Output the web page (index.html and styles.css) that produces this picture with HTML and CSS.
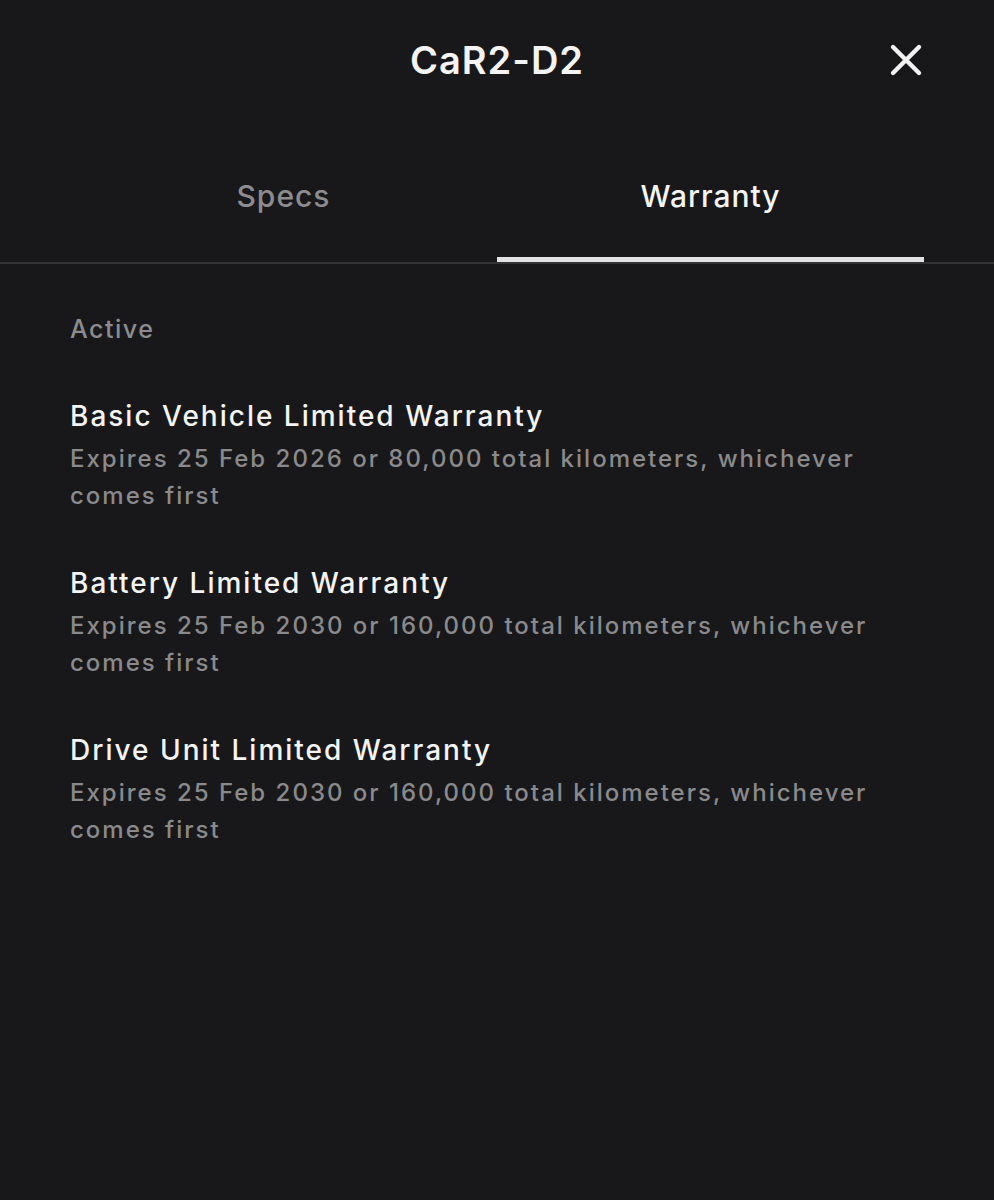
FILE: index.html
```html
<!DOCTYPE html>
<html>
<head>
<meta charset="utf-8">
<link rel="stylesheet" href="styles.css">
</head>
<body>
<div class="screen">
  <header class="header">
    <h1 class="title">CaR2-D2</h1>
    <button class="close" aria-label="Close">
      <svg viewBox="0 0 34 34" width="34" height="34"><path d="M4 4 L30 30 M30 4 L4 30" stroke="#f2f2f2" stroke-width="4.4" stroke-linecap="round" fill="none"/></svg>
    </button>
  </header>
  <nav class="tabs">
    <div class="tab">Specs</div>
    <div class="tab active">Warranty</div>
  </nav>
  <section class="content">
    <div class="section-label">Active</div>
    <div class="item">
      <div class="item-title">Basic Vehicle Limited Warranty</div>
      <div class="item-sub">Expires 25 Feb 2026 or 80,000 total kilometers, whichever comes first</div>
    </div>
    <div class="item">
      <div class="item-title">Battery Limited Warranty</div>
      <div class="item-sub">Expires 25 Feb 2030 or 160,000 total kilometers, whichever comes first</div>
    </div>
    <div class="item">
      <div class="item-title">Drive Unit Limited Warranty</div>
      <div class="item-sub">Expires 25 Feb 2030 or 160,000 total kilometers, whichever comes first</div>
    </div>
  </section>
</div>
</body>
</html>
```
FILE: styles.css
```css
* { box-sizing: border-box; }
html, body { margin: 0; padding: 0; background: #18181a; }
body { font-family: Inter, "Noto Sans", sans-serif; color: #f2f2f2; }
.screen { width: 994px; min-height: 1200px; background: #18181a; }
.header { position: relative; height: 124px; display: flex; align-items: center; justify-content: center; }
.title { margin: 0; font-size: 38px; font-weight: 600; letter-spacing: 1px; color: #f4f4f4; transform: translateY(-2px); }
.close { position: absolute; right: 71px; top: 43px; background: none; border: 0; padding: 0; width: 34px; height: 34px; }
.close svg { display: block; }
.tabs { display: flex; border-bottom: 2px solid #333335; height: 140px; }
.tab { flex: 1; display: flex; align-items: center; justify-content: center; font-size: 30px; font-weight: 500; letter-spacing: 1px; color: #8c8c8e; position: relative; padding-top: 6px; }
.tab:first-child { margin-left: 70px; }
.tab:last-child { margin-right: 70px; }
.tab.active { color: #f4f4f4; }
.tab.active::after { content: ""; position: absolute; left: 0; right: 0; bottom: 0; height: 5px; background: #e2e2e2; }
.content { padding: 50px 70px 0; }
.section-label { font-size: 25px; font-weight: 500; letter-spacing: 1.5px; color: #8c8c8e; margin-bottom: 52px; }
.item { margin-bottom: 49px; }
.item-title { font-size: 28px; font-weight: 500; letter-spacing: 2px; color: #f4f4f4; line-height: 40px; }
.item-sub { font-size: 24px; font-weight: 500; letter-spacing: 2px; color: #8a8a8c; line-height: 37px; margin-top: 4px; }
```
